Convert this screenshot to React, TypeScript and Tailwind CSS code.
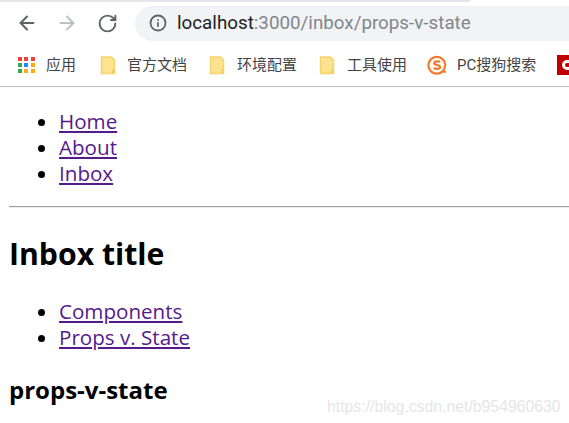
import { ArrowLeft, ArrowRight, RotateCw, Info } from "lucide-react";

const UI_FONT = "font-['Roboto','Noto_Sans_CJK_SC',sans-serif]";

function Folder() {
  return (
    <svg width="16" height="19" viewBox="0 0 16 19" className="shrink-0">
      <path d="M1.5 1h10l3 3v13.5h-13z" fill="#fde28f" stroke="#f5d46e" strokeWidth="1.5" />
      <rect x="12" y="13" width="3" height="4" fill="#f3cf62" />
    </svg>
  );
}

function AppsGrid() {
  const colors = ["#ef4136", "#ef4136", "#ef4136", "#34a853", "#1a8cff", "#fbac09", "#34a853", "#fbac09", "#fbac09"];
  return (
    <div className="grid shrink-0 grid-cols-3 gap-[2px]">
      {colors.map((c, i) => (
        <span key={i} className="block h-[4px] w-[4px]" style={{ backgroundColor: c }} />
      ))}
    </div>
  );
}

function Sogou() {
  return (
    <svg width="20" height="20" viewBox="0 0 22 22" className="shrink-0">
      <path d="M18 17A9.2 9.2 0 1 1 20 11c0 2-.5 4-2 6l2.5 2.5" fill="none" stroke="#f47a2c" strokeWidth="2.4" />
      <path d="M14.5 7.6C13 6.6 8 6.6 8 9c0 2.6 6.5 1.4 6.5 4.2 0 2.5-5 2.4-7 1.1" fill="none" stroke="#f47a2c" strokeWidth="2.4" />
    </svg>
  );
}

function Bookmark({ icon, label, gap }: { icon: React.ReactNode; label: string; gap: string }) {
  return (
    <div className={`flex shrink-0 items-center ${gap}`}>
      {icon}
      <span className="text-[15px] whitespace-nowrap text-[#444]">{label}</span>
    </div>
  );
}

export default function App() {
  return (
    <div className="relative h-[423px] w-[569px] overflow-hidden bg-white">
      <div className={UI_FONT}>
        <div className="h-[2px] w-[470px] bg-[#e3e5e8]" />
        <div className="flex h-[42px] items-center pl-[16px]">
          <ArrowLeft size={22} strokeWidth={2.2} className="shrink-0 text-[#5f6368]" />
          <ArrowRight size={22} strokeWidth={2.2} className="ml-[18px] shrink-0 text-[#bdc1c6]" />
          <RotateCw size={21} strokeWidth={2.2} className="ml-[19px] shrink-0 text-[#5f6368]" />
          <div className="ml-[17px] flex h-[35px] flex-1 items-center rounded-l-full bg-[#f1f3f4] pl-[14px]">
            <Info size={18} strokeWidth={2.4} className="shrink-0 text-[#5f6368]" />
            <span className="ml-[10px] text-[18.8px] whitespace-nowrap text-[#202124]">
              localhost<span className="text-[#80868b]">:3000/inbox/props-v-state</span>
            </span>
          </div>
        </div>
        <div className="flex h-[43px] items-center overflow-hidden border-b border-[#bbbbbb] pl-[18px]">
          <div className="w-[17px] shrink-0"><AppsGrid /></div>
          <span className="ml-[11px] shrink-0 text-[15px] text-[#444]">应用</span>
          <div className="ml-[24px]"><Bookmark icon={<Folder />} label="官方文档" gap="gap-[11px]" /></div>
          <div className="ml-[22px]"><Bookmark icon={<Folder />} label="环境配置" gap="gap-[12px]" /></div>
          <div className="ml-[22px]"><Bookmark icon={<Folder />} label="工具使用" gap="gap-[12px]" /></div>
          <div className="ml-[20px]"><Bookmark icon={<Sogou />} label="PC搜狗搜索" gap="gap-[10px]" /></div>
          <div className="ml-[21px] flex h-[20px] w-[24px] shrink-0 items-center justify-center bg-[#c00000]">
            <span className="h-[10px] w-[14px] rounded-full border-[3px] border-white" />
          </div>
        </div>
      </div>

      <div className="pl-[9px] font-['Open_Sans',sans-serif] text-[20.6px] leading-[26px] text-black">
        <ul className="mt-[21px] list-disc pl-[50px]">
          <li><a href="#" className="text-[#551a8b] underline">Home</a></li>
          <li><a href="#" className="text-[#551a8b] underline">About</a></li>
          <li><a href="#" className="text-[#551a8b] underline">Inbox</a></li>
        </ul>
        <hr className="mt-[20px] border-t border-b border-t-[#a0a0a0] border-b-[#eeeeee]" />
        <h2 className="mt-[25px] text-[30.2px] leading-[42px] font-bold">Inbox title</h2>
        <ul className="mt-[23px] list-disc pl-[50px]">
          <li><a href="#" className="text-[#551a8b] underline">Components</a></li>
          <li><a href="#" className="text-[#551a8b] underline">Props v. State</a></li>
        </ul>
        <h3 className="mt-[24px] text-[24px] leading-[32px] font-bold">props-v-state</h3>
      </div>

      <span className="absolute top-[395px] left-[327px] font-['Liberation_Sans',sans-serif] text-[15.8px] text-[#e6e6e6]">
        https://blog.csdn.net/b954960630
      </span>
    </div>
  );
}
